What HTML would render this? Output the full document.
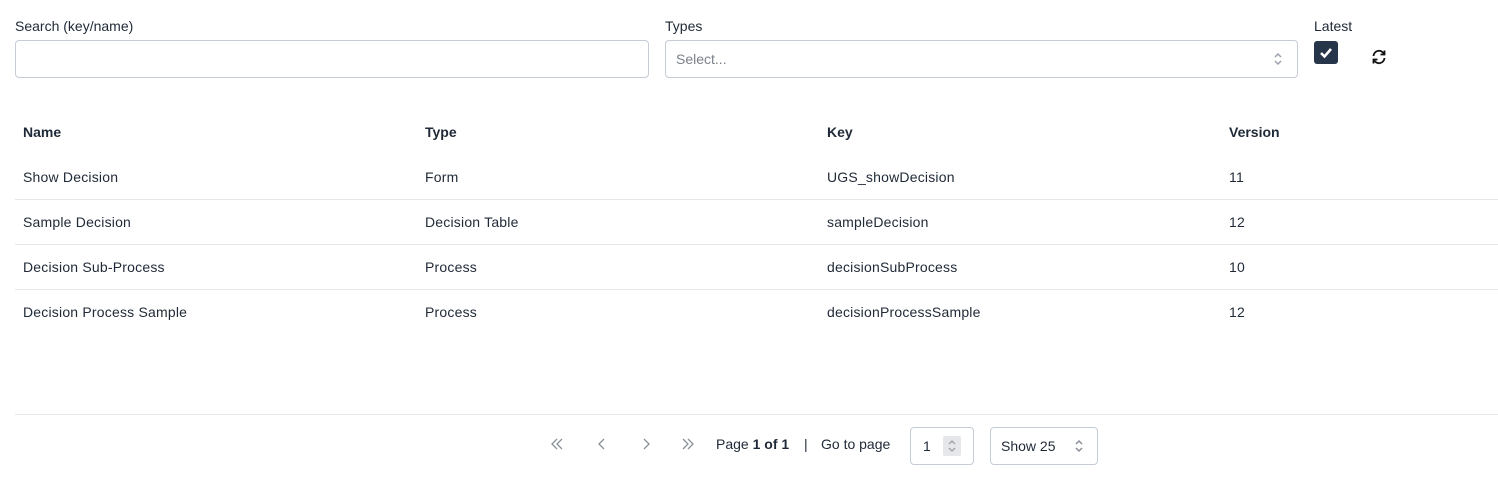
<!DOCTYPE html>
<html><head><style>
*{box-sizing:border-box;margin:0;padding:0}
body{width:1498px;height:501px;background:#fff;font-family:"Liberation Sans",sans-serif;color:#1f2937;font-size:14px;position:relative;overflow:hidden}
.abs{position:absolute}
.lbl{font-size:14px;color:#1f2937}
.inp{border:1px solid #c5ccd6;border-radius:4px;background:#fff}
.th{font-weight:bold;font-size:14px}
.row{position:absolute;left:15px;width:1483px;height:45px;border-bottom:1px solid #e5e7eb}
.row span{position:absolute;top:14px;font-size:14px;letter-spacing:0.2px}
</style></head><body>
<div class="abs lbl" style="left:15px;top:18px">Search (key/name)</div>
<div class="abs inp" style="left:15px;top:40px;width:634px;height:38px"></div>
<div class="abs lbl" style="left:665px;top:18px">Types</div>
<div class="abs inp" style="left:665px;top:40px;width:633px;height:38px;color:#7b818a;padding:10px 10px">Select...</div>
<svg class="abs" style="left:1272px;top:51px" width="12" height="16" viewBox="0 0 12 16"><path d="M3 6l3-3 3 3M3 10l3 3 3-3" stroke="#9aa1ab" stroke-width="1.5" fill="none"/></svg>
<div class="abs lbl" style="left:1314px;top:18px">Latest</div>
<div class="abs" style="left:1314px;top:41px;width:24px;height:23px;background:#27354a;border-radius:3px"></div>
<svg class="abs" style="left:1314px;top:41px" width="24" height="23"><path d="M7 12l3.5 3.5L17 8" stroke="#fff" stroke-width="2.5" fill="none"/></svg>
<svg class="abs" style="left:1370px;top:48px" width="18" height="18" viewBox="0 0 18 18" fill="none" stroke="#111" stroke-width="1.8"><path d="M3.5 8A5.5 5.5 0 0 1 14 6"/><path d="M14.5 2.5v4h-4"/><path d="M14.5 10A5.5 5.5 0 0 1 4 12"/><path d="M3.5 15.5v-4h4"/></svg>
<div class="abs th" style="left:23px;top:124px">Name</div>
<div class="abs th" style="left:425px;top:124px">Type</div>
<div class="abs th" style="left:827px;top:124px">Key</div>
<div class="abs th" style="left:1229px;top:124px">Version</div>
<div class="row" style="top:155px"><span style="left:8px">Show Decision</span><span style="left:410px">Form</span><span style="left:812px">UGS_showDecision</span><span style="left:1214px">11</span></div>
<div class="row" style="top:200px"><span style="left:8px">Sample Decision</span><span style="left:410px">Decision Table</span><span style="left:812px">sampleDecision</span><span style="left:1214px">12</span></div>
<div class="row" style="top:245px"><span style="left:8px">Decision Sub-Process</span><span style="left:410px">Process</span><span style="left:812px">decisionSubProcess</span><span style="left:1214px">10</span></div>
<div class="row" style="top:290px;border:none"><span style="left:8px">Decision Process Sample</span><span style="left:410px">Process</span><span style="left:812px">decisionProcessSample</span><span style="left:1214px">12</span></div>
<div class="abs" style="left:15px;top:414px;width:1483px;height:1px;background:#e5e7eb"></div>
<svg class="abs" style="left:550px;top:437px" width="150" height="14" fill="none" stroke="#8a9099" stroke-width="1.3"><path d="M7 2L2 7l5 5M12 2L7 7l5 5"/><path d="M54 2l-5 5 5 5"/><path d="M94 2l5 5-5 5"/><path d="M133 2l5 5-5 5M138 2l5 5-5 5"/></svg>
<div class="abs" style="left:716px;top:436px">Page <b>1 of 1</b></div>
<div class="abs" style="left:804px;top:436px">|</div>
<div class="abs" style="left:821px;top:436px">Go to page</div>
<div class="abs inp" style="left:910px;top:427px;width:64px;height:38px;padding:10px 12px">1</div>
<div class="abs" style="left:943px;top:436px;width:18px;height:20px;background:#e5e7eb;border-radius:2px"></div>
<svg class="abs" style="left:946px;top:438px" width="12" height="16"><path d="M3 6l3-3 3 3M3 10l3 3 3-3" stroke="#9aa1ab" stroke-width="1.3" fill="none"/></svg>
<div class="abs inp" style="left:990px;top:427px;width:108px;height:38px;padding:10px 10px">Show 25</div>
<svg class="abs" style="left:1073px;top:438px" width="12" height="16"><path d="M3 6l3-3 3 3M3 10l3 3 3-3" stroke="#8a9099" stroke-width="1.5" fill="none"/></svg>
</body></html>
